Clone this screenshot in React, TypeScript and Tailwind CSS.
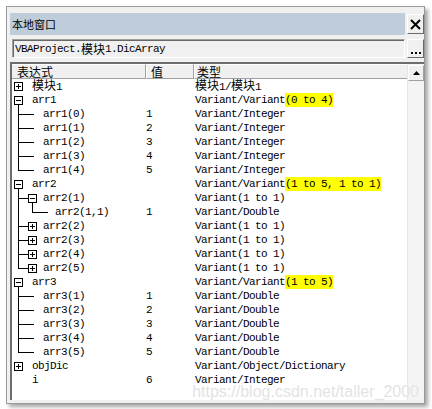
import React from 'react'

type Row = {
  name: string
  level: number
  box?: '+' | '-'
  last?: boolean
  guides?: number[] // ancestor guide x positions that continue through this row
  value?: string
  type: string
  hl?: string
}

const rows: Row[] = [
  { name: '模块1', level: 0, box: '+', type: '模块1/模块1' },
  { name: 'arr1', level: 0, box: '-', type: 'Variant/Variant', hl: '(0 to 4)' },
  { name: 'arr1(0)', level: 1, value: '1', type: 'Variant/Integer' },
  { name: 'arr1(1)', level: 1, value: '2', type: 'Variant/Integer' },
  { name: 'arr1(2)', level: 1, value: '3', type: 'Variant/Integer' },
  { name: 'arr1(3)', level: 1, value: '4', type: 'Variant/Integer' },
  { name: 'arr1(4)', level: 1, value: '5', type: 'Variant/Integer', last: true },
  { name: 'arr2', level: 0, box: '-', type: 'Variant/Variant', hl: '(1 to 5, 1 to 1)' },
  { name: 'arr2(1)', level: 1, box: '-', type: 'Variant(1 to 1)' },
  { name: 'arr2(1,1)', level: 2, value: '1', type: 'Variant/Double', last: true, guides: [6] },
  { name: 'arr2(2)', level: 1, box: '+', type: 'Variant(1 to 1)' },
  { name: 'arr2(3)', level: 1, box: '+', type: 'Variant(1 to 1)' },
  { name: 'arr2(4)', level: 1, box: '+', type: 'Variant(1 to 1)' },
  { name: 'arr2(5)', level: 1, box: '+', type: 'Variant(1 to 1)', last: true },
  { name: 'arr3', level: 0, box: '-', type: 'Variant/Variant', hl: '(1 to 5)' },
  { name: 'arr3(1)', level: 1, value: '1', type: 'Variant/Double' },
  { name: 'arr3(2)', level: 1, value: '2', type: 'Variant/Double' },
  { name: 'arr3(3)', level: 1, value: '3', type: 'Variant/Double' },
  { name: 'arr3(4)', level: 1, value: '4', type: 'Variant/Double' },
  { name: 'arr3(5)', level: 1, value: '5', type: 'Variant/Double', last: true },
  { name: 'objDic', level: 0, box: '+', type: 'Variant/Object/Dictionary' },
  { name: 'i', level: 0, value: '6', type: 'Variant/Integer' },
]

// guide x (center of the box) for each level, relative to the cell's left edge
const boxCenter = [6, 20, 34]
const textX = [20, 31, 43]

function TreeGutter({ r }: { r: Row }) {
  const w = textX[r.level]
  const parentGuide = r.level > 0 ? boxCenter[r.level - 1] : 0
  const cx = boxCenter[r.level]
  return (
    <svg width={w} height={14} className="shrink-0" shapeRendering="crispEdges">
      {(r.guides || []).map(g => (
        <line key={g} x1={g + 0.5} y1={0} x2={g + 0.5} y2={14} stroke="#000" />
      ))}
      {r.level > 0 && (
        <>
          <line x1={parentGuide + 0.5} y1={0} x2={parentGuide + 0.5} y2={r.last ? 8 : 14} stroke="#000" />
          <line x1={parentGuide + 0.5} y1={7.5} x2={r.box ? cx - 4 : parentGuide + 16} y2={7.5} stroke="#000" />
        </>
      )}
      {r.box && (
        <>
          <rect x={cx - 3.5} y={3.5} width={8} height={8} fill="#fff" stroke="#000" />
          <line x1={cx - 2} y1={7.5} x2={cx + 3} y2={7.5} stroke="#000" />
          {r.box === '+' && <line x1={cx + 0.5} y1={5} x2={cx + 0.5} y2={10} stroke="#000" />}
          {r.box === '-' && <line x1={cx + 0.5} y1={12} x2={cx + 0.5} y2={14} stroke="#000" />}
        </>
      )}
    </svg>
  )
}

const mono = "font-['Liberation_Mono','Noto_Sans_CJK_SC',monospace] text-[11px] tracking-[-0.6px]"
const cjk = "font-['Noto_Sans_CJK_SC','Liberation_Sans',sans-serif]"

function Txt({ s }: { s: string }) {
  // CJK chars get their own 12px span so they take a full cell
  const parts = s.split(/([\u4e00-\u9fff]+)/)
  return (
    <>
      {parts.map((p, i) =>
        /[\u4e00-\u9fff]/.test(p) ? (
          <span key={i} className={`${cjk} text-[12px] tracking-normal`}>{p}</span>
        ) : (
          <span key={i}>{p}</span>
        )
      )}
    </>
  )
}

export default function App() {
  return (
    <div className="w-[432px] h-[409px] bg-white pt-[6px] pl-[6px] overflow-hidden">
      <div className="relative w-[419px] h-[398px] bg-[#f0f0f0] border border-[#9a9a9a] shadow-[3px_3px_4px_rgba(0,0,0,0.35)] flex flex-col">
        {/* title */}
        <div className="flex items-center mt-[6px] h-[22px]">
          <div className={`ml-[3px] flex-1 h-full bg-[#bfcddb] flex items-center pl-[2px] text-[11px] leading-none text-black ${cjk}`}>本地窗口</div>
          <div className="ml-[2px] w-[17px] h-[20px] bg-[#f0f0f0] border border-t-white border-l-white border-b-[#696969] border-r-[#696969] flex items-center justify-center">
            <svg width="11" height="11" viewBox="0 0 11 11">
              <path d="M1 1L10 10M10 1L1 10" stroke="#000" strokeWidth="2" />
            </svg>
          </div>
        </div>
        {/* expression box */}
        <div className="flex items-stretch mt-[4px] h-[19px]">
          <div className={`ml-[5px] flex-1 bg-[#f0f0f0] border border-t-[#a0a0a0] border-l-[#a0a0a0] border-b-white border-r-white flex items-center ${mono}`}>
            <div className="border-t border-l border-t-[#696969] border-l-[#696969] w-full h-full flex items-center pl-[1px]">
              <Txt s="VBAProject.模块1.DicArray" />
            </div>
          </div>
          <div className="ml-[2px] w-[17px] bg-[#f0f0f0] border border-t-white border-l-white border-b-[#696969] border-r-[#696969] flex items-end justify-center pb-[3px]">
            <svg width="10" height="2"><rect x="0" y="0" width="2" height="2" /><rect x="4" y="0" width="2" height="2" /><rect x="8" y="0" width="2" height="2" /></svg>
          </div>
        </div>
        {/* list */}
        <div className="mt-[4px] ml-[3px] h-[338px] border-t-2 border-l-2 border-t-[#6d6d6d] border-l-[#6d6d6d] bg-white flex">
          <div className="flex-1 flex flex-col">
            <div className={`flex h-[15px] bg-[#f0f0f0] text-[12px] leading-none text-black ${cjk}`}>
              <div className="w-[134px] border-r border-b border-r-[#a0a0a0] border-b-[#a0a0a0] border-t border-t-white pl-[5px] flex items-center">表达式</div>
              <div className="w-[48px] border-l border-l-white border-r border-b border-r-[#a0a0a0] border-b-[#a0a0a0] border-t border-t-white pl-[4px] flex items-center">值</div>
              <div className="flex-1 border-l border-l-white border-b border-b-[#a0a0a0] border-t border-t-white pl-[2px] flex items-center">类型</div>
            </div>
            <div className={`flex flex-col text-black ${mono}`}>
              {rows.map((r, i) => (
                <div key={i} className="flex h-[14px] items-center">
                  <div className="w-[134px] flex items-center">
                    <TreeGutter r={r} />
                    <span className="leading-[14px]"><Txt s={r.name} /></span>
                  </div>
                  <div className="w-[49px] leading-[14px]">{r.value}</div>
                  <div className="flex-1 leading-[14px] whitespace-pre">
                    <Txt s={r.type} />
                    {r.hl && <span className="bg-[#ffff00] py-[1px]">{r.hl}</span>}
                  </div>
                </div>
              ))}
            </div>
          </div>
          {/* scrollbar */}
          <div className="w-[17px] bg-[#f4f4f4] border-l border-l-[#e6e6e6] flex flex-col">
            <div className="mt-[1px] h-[16px] bg-[#f0f0f0] border border-t-white border-l-white border-b-[#a0a0a0] border-r-[#a0a0a0] flex items-center justify-center">
              <svg width="7" height="4"><path d="M3.5 0L7 4H0Z" fill="#000" /></svg>
            </div>
          </div>
        </div>
        {/* watermark */}
        <div className="absolute right-[5px] bottom-[3px] text-[16px] leading-none font-['Liberation_Sans',Arial,sans-serif] text-[#e3e3e3] [text-shadow:0_0_1px_#fff] pointer-events-none">
          https://blog.csdn.net/taller_2000
        </div>
      </div>
    </div>
  )
}
